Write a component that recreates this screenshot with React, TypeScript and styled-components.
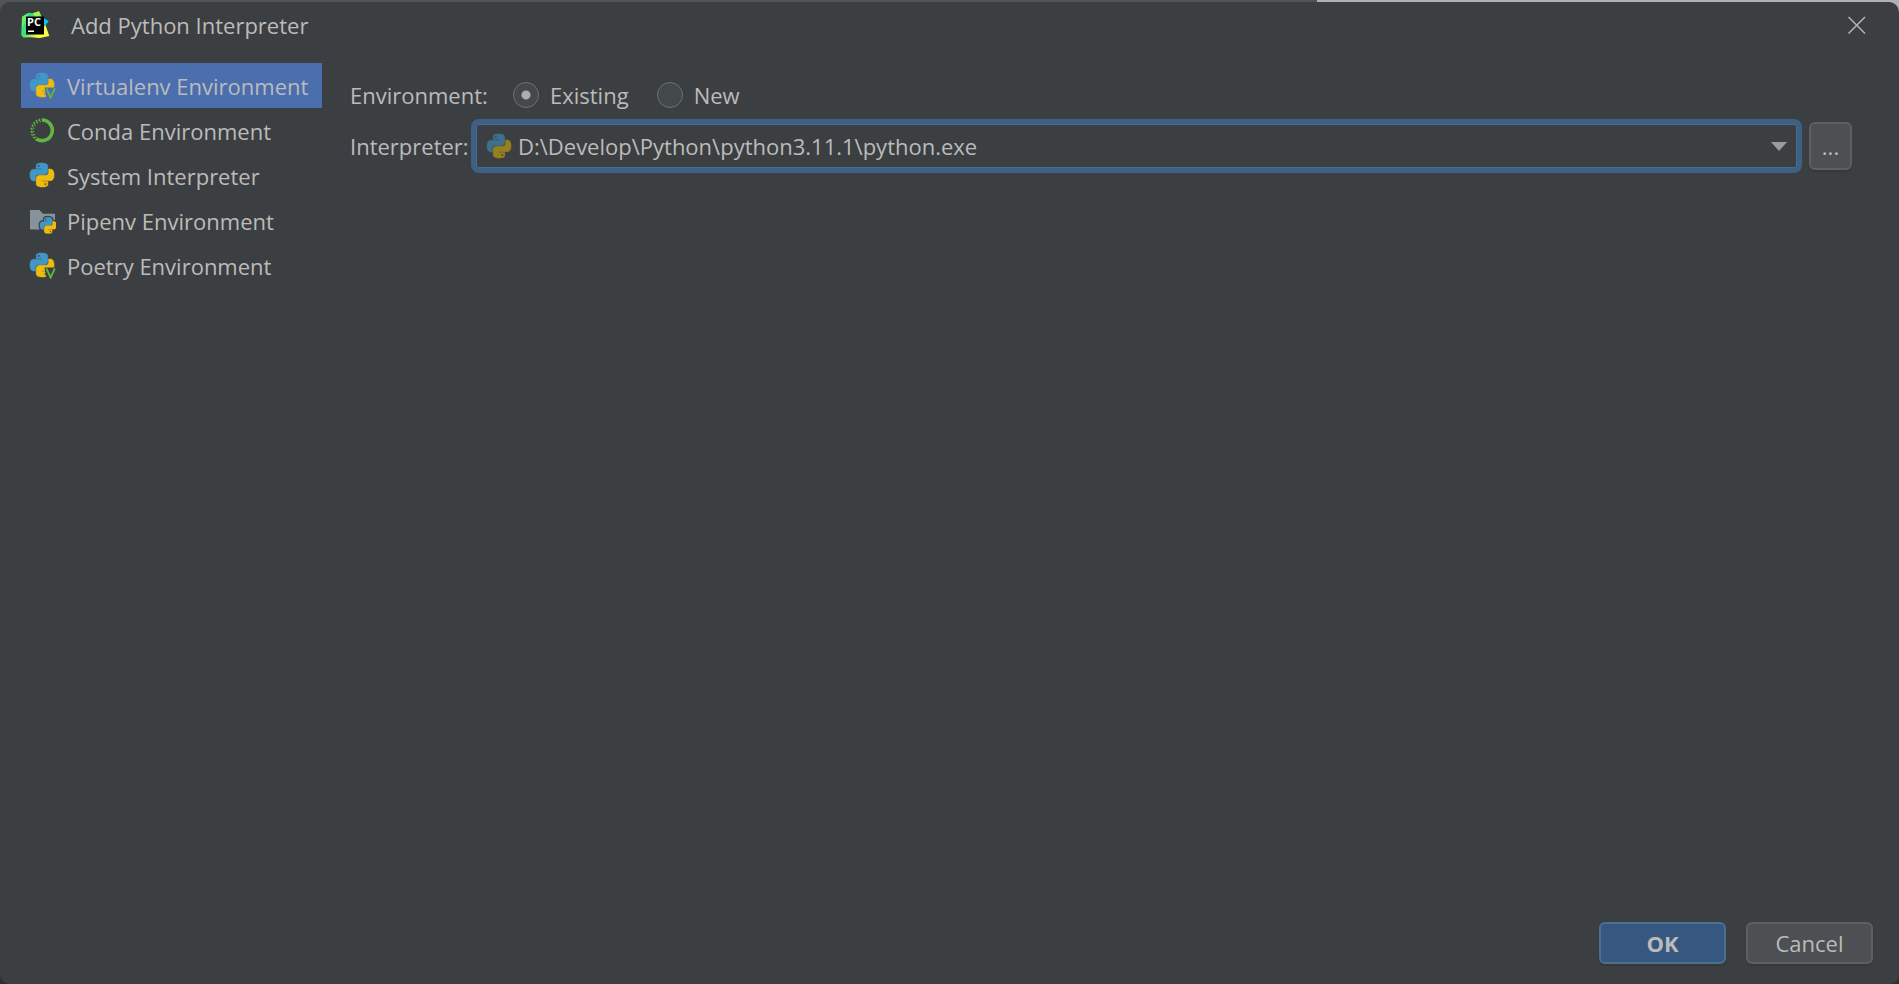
import React, { useState } from "react";
import styled, { createGlobalStyle } from "styled-components";

const font = `"Open Sans", "Noto Sans", sans-serif`;

const GlobalStyle = createGlobalStyle`
  *, *::before, *::after { box-sizing: border-box; }
  body { margin: 0; background: #2b2b2b; }
`;

/* The strip of desktop that shows above and behind the dialog's round corners. */
const Desktop = styled.div`
  min-height: 100vh;
  padding-top: 2px;
  display: flex;
  background: linear-gradient(to right, #515355 0 1317px, #b1b1b1 1317px 100%) top / 100% 12px no-repeat #2e3032;
`;

const Dialog = styled.form`
  flex: 1;
  display: flex;
  flex-direction: column;
  border-radius: 10px;
  background: #3c3f41;
  color: #bbbbbb;
  font-family: ${font};
  font-size: 22px;
  line-height: 30px;
`;

const TitleBar = styled.header`
  display: flex;
  align-items: center;
  height: 46px;
  padding: 0 30px 0 20px;
`;

const Title = styled.h1`
  flex: 1;
  margin: 0 0 0 21px;
  font-size: 22px;
  font-weight: 400;
  line-height: 30px;
`;

const CloseButton = styled.button`
  display: flex;
  padding: 2px;
  border: 0;
  background: none;
  color: #b4b5b6;
`;

const Body = styled.div`
  flex: 1;
  display: flex;
  gap: 28px;
  padding: 15px 47px 0 21px;
`;

const EnvironmentList = styled.nav`
  width: 301px;
  display: flex;
  flex-direction: column;
`;

const EnvironmentItem = styled.button<{ $selected: boolean }>`
  display: flex;
  align-items: center;
  gap: 11px;
  height: 45px;
  padding: 0 8px;
  border: 0;
  background: ${(p) => (p.$selected ? "#4b6eaf" : "transparent")};
  color: inherit;
  font: inherit;
  text-align: left;
  white-space: nowrap;
`;

const Settings = styled.main`
  flex: 1;
  display: flex;
  flex-direction: column;
  gap: 9px;
  padding-top: 17px;
`;

const RadioRow = styled.fieldset`
  display: flex;
  align-items: center;
  height: 30px;
  margin: 0;
  padding: 0;
  border: 0;
`;

const RowLabel = styled.span`
  width: 163px;
`;

const RadioLabel = styled.label`
  display: flex;
  align-items: center;
  gap: 11px;
  margin-right: 28px;
`;

const Radio = styled.input`
  appearance: none;
  width: 26px;
  height: 26px;
  margin: 0;
  border: 1px solid #6f7071;
  border-radius: 50%;
  background: #43494a;
  &:checked {
    background: radial-gradient(circle, #adadad 0 4px, #43494a 5px);
  }
`;

const InterpreterRow = styled.div`
  display: flex;
  align-items: center;
`;

const InterpreterLabel = styled.label`
  width: 121px;
`;

const ComboBox = styled.div`
  flex: 1;
  display: grid;
  grid-template-columns: auto 1fr auto;
  align-items: center;
  height: 54px;
  padding: 0 10px;
  border: 5px solid #3d6185;
  border-radius: 8px;
  box-shadow: inset 0 0 0 1px #466d94;
  & > svg {
    grid-row: 1;
    pointer-events: none;
  }
  & > svg:first-of-type {
    grid-column: 1;
  }
  & > svg:last-of-type {
    grid-column: 3;
  }
`;

const ComboSelect = styled.select`
  appearance: none;
  grid-row: 1;
  grid-column: 1 / -1;
  width: 100%;
  height: 38px;
  padding: 0 30px 0 32px;
  border: 0;
  outline: 0;
  background: transparent;
  color: inherit;
  font: inherit;
`;

const Button = styled.button<{ $primary?: boolean }>`
  width: 127px;
  height: 42px;
  padding: 0;
  border: 2px solid ${(p) => (p.$primary ? "#4c708c" : "#5e6060")};
  border-radius: 6px;
  background: ${(p) => (p.$primary ? "#365880" : "#4c5052")};
  box-shadow: 0 2px 2px rgba(0, 0, 0, 0.12);
  color: #bbbbbb;
  font: inherit;
  font-weight: ${(p) => (p.$primary ? 700 : 400)};
`;

const BrowseButton = styled(Button)`
  width: 43px;
  height: 48px;
  margin-left: 7px;
`;

const Footer = styled.footer`
  display: flex;
  justify-content: flex-end;
  gap: 20px;
  padding: 0 26px 20px;
`;

const BLUE =
  "M14.25.18l.9.2.73.26.59.3.45.32.34.34.25.34.16.33.1.3.04.26.02.2-.01.13V8.5l-.05.63-.13.55-.21.46-.26.38-.3.31-.33.25-.35.19-.35.14-.33.1-.3.07-.26.04-.21.02H8.77l-.69.05-.59.14-.5.22-.41.27-.33.32-.27.35-.2.36-.15.37-.1.35-.07.32-.04.27-.02.21v3.06H3.17l-.21-.03-.28-.07-.32-.12-.35-.18-.36-.26-.36-.36-.35-.46-.32-.59-.28-.73-.21-.88-.14-1.05-.05-1.23.06-1.22.16-1.04.24-.87.32-.71.36-.57.4-.44.42-.33.42-.24.4-.16.36-.1.32-.05.24-.01h.16l.06.01h8.16v-.83H6.18l-.01-2.75-.02-.37.05-.34.11-.31.17-.28.25-.26.31-.23.38-.2.44-.18.51-.15.58-.12.64-.1.71-.06.77-.04.84-.02 1.27.05zm-6.3 1.98l-.23.33-.08.41.08.41.23.34.33.22.41.09.41-.09.33-.22.23-.34.08-.41-.08-.41-.23-.33-.33-.22-.41-.09-.41.09z";
const YELLOW =
  "M21.04 6.11l.28.06.32.12.35.18.36.27.36.35.35.47.32.59.28.73.21.88.14 1.04.05 1.23-.06 1.23-.16 1.04-.24.86-.32.71-.36.57-.4.45-.42.33-.42.24-.4.16-.36.09-.32.05-.24.02-.16-.01h-8.22v.82h5.84l.01 2.76.02.36-.05.34-.11.31-.17.29-.25.25-.31.24-.38.2-.44.17-.51.15-.58.13-.64.09-.71.07-.77.04-.84.01-1.27-.04-1.07-.14-.9-.2-.73-.25-.59-.3-.45-.33-.34-.34-.25-.34-.16-.33-.1-.3-.04-.25-.02-.2.01-.13v-5.34l.05-.64.13-.54.21-.46.26-.38.3-.32.33-.24.35-.2.35-.14.33-.1.3-.06.26-.04.21-.02.13-.01h5.84l.69-.05.59-.14.5-.21.41-.28.33-.32.27-.35.2-.36.15-.36.1-.35.07-.32.04-.28.02-.21V6.07h2.09l.14.01zm-6.47 14.25l-.23.33-.08.41.08.41.23.33.33.23.41.08.41-.08.33-.23.23-.33.08-.41-.08-.41-.23-.33-.33-.23-.41-.08-.41.08z";

const Snakes = ({ blue = "#4097c8", yellow = "#eebc0e" }) => (
  <>
    <path fill={blue} stroke={blue} strokeWidth=".5" d={BLUE} />
    <path fill={yellow} stroke={yellow} strokeWidth=".5" d={YELLOW} />
  </>
);

const PythonIcon = ({ dim = false }: { dim?: boolean }) => (
  <svg width="27" height="27" viewBox="-1 -1 27 27" aria-hidden="true">
    {dim ? <Snakes blue="#3f6f8a" yellow="#97811f" /> : <Snakes />}
  </svg>
);

const VirtualenvIcon = ({ backdrop }: { backdrop: string }) => (
  <svg width="27" height="27" viewBox="-1 -1 27 27" aria-hidden="true">
    <Snakes />
    <path fill={backdrop} d="M14.5 14.6H26V26H16.6z" />
    <path fill="none" stroke="#62b543" strokeWidth="1.9" d="M16.4 15.4l4.2 9.2 4.2-9.2" />
  </svg>
);

const CondaIcon = () => (
  <svg width="27" height="27" viewBox="-1 -1 27 27" aria-hidden="true" fill="none" stroke="#62b543">
    <path strokeWidth="3.6" d="M12 2a10.300 10.300 0 1 1-5.500 19" />
    <path strokeWidth="1.3" strokeDasharray="1.6 1.6" d="M6.500 22.200A11.600 11.600 0 0 1 12 .8" />
    <path strokeWidth="1.3" strokeDasharray="1.5 1.5" strokeDashoffset="1.600" d="M6.300 21A10.400 10.400 0 0 1 12 2.100" />
    <path strokeWidth="1.200" strokeDasharray="1.300 1.900" d="M6.600 19.600A9.200 9.200 0 0 1 11.800 3.400" />
  </svg>
);

const PipenvIcon = () => (
  <svg width="27" height="27" viewBox="-1 -1 27 27" aria-hidden="true">
    <path fill="#87939a" d="M0 2h9.4l3.6 3.8H25V21.600H0z" />
    <g transform="translate(10 9.200) scale(.68)">
      <path fill="#3c3f41" stroke="#3c3f41" strokeWidth="4" d={BLUE} />
      <path fill="#3c3f41" stroke="#3c3f41" strokeWidth="4" d={YELLOW} />
      <Snakes />
    </g>
  </svg>
);

const PyCharmLogo = () => (
  <svg width="30" height="28" viewBox="0 0 30 28" aria-hidden="true">
    <defs>
      <linearGradient id="pcBase" x1="0" y1="0" x2="1" y2="1">
        <stop offset="0" stopColor="#21d789" />
        <stop offset=".5" stopColor="#3fe07c" />
        <stop offset=".75" stopColor="#fcf84a" />
      </linearGradient>
    </defs>
    <path fill="url(#pcBase)" d="M2 5.700L8.700 1.700l4 .6L19 .2l2 4.300 4 6 .300 3L29.300 25 20 26.900l-9-.7-7.700.3L1.200 24z" />
    <path fill="#6eea5f" d="M2 5.700L8.700 1.700 6.500 8 2 18z" />
    <path fill="#a6f04c" d="M12.700 2.300L19 .2l2 4.300-6 1.500z" />
    <path fill="#07c3f2" d="M23.500 7l5.200 2.900-3.300 4.500-1.900 1.100z" />
    <rect x="6" y="5.500" width="18" height="18" fill="#000" />
    <text x="7" y="15" fill="#fff" fontFamily={font} fontSize="11" fontWeight="700">PC</text>
    <rect x="8" y="19.500" width="6" height="1.500" fill="#fff" />
  </svg>
);

const environments = [
  { name: "Virtualenv Environment", icon: (bg: string) => <VirtualenvIcon backdrop={bg} /> },
  { name: "Conda Environment", icon: () => <CondaIcon /> },
  { name: "System Interpreter", icon: () => <PythonIcon /> },
  { name: "Pipenv Environment", icon: () => <PipenvIcon /> },
  { name: "Poetry Environment", icon: (bg: string) => <VirtualenvIcon backdrop={bg} /> },
];

export default function App() {
  const [selected, setSelected] = useState(0);
  return (
    <Desktop>
      <GlobalStyle />
      <Dialog onSubmit={(e) => e.preventDefault()}>
        <TitleBar>
          <PyCharmLogo />
          <Title>Add Python Interpreter</Title>
          <CloseButton type="button" aria-label="Close">
            <svg width="20" height="20" viewBox="0 0 20 20" fill="none" stroke="currentColor" strokeWidth="1.500">
              <path d="M1.500 2l16.500 16.500M18 2L1.500 18.500" />
            </svg>
          </CloseButton>
        </TitleBar>
        <Body>
          <EnvironmentList>
            {environments.map((env, i) => (
              <EnvironmentItem key={env.name} type="button" $selected={i === selected} onClick={() => setSelected(i)}>
                {env.icon(i === selected ? "#4b6eaf" : "#3c3f41")}
                {env.name}
              </EnvironmentItem>
            ))}
          </EnvironmentList>
          <Settings>
            <RadioRow aria-label="Environment">
              <RowLabel>Environment:</RowLabel>
              <RadioLabel>
                <Radio type="radio" name="environment" defaultChecked />
                Existing
              </RadioLabel>
              <RadioLabel>
                <Radio type="radio" name="environment" />
                New
              </RadioLabel>
            </RadioRow>
            <InterpreterRow>
              <InterpreterLabel htmlFor="interpreter">Interpreter:</InterpreterLabel>
              <ComboBox>
                <PythonIcon dim />
                <ComboSelect id="interpreter">
                  <option>D:\Develop\Python\python3.11.1\python.exe</option>
                </ComboSelect>
                <svg width="16" height="10" viewBox="0 0 16 10" aria-hidden="true">
                  <path fill="#9a9da0" d="M0 1h16L8 10z" />
                </svg>
              </ComboBox>
              <BrowseButton type="button" aria-label="Browse">...</BrowseButton>
            </InterpreterRow>
          </Settings>
        </Body>
        <Footer>
          <Button type="submit" $primary>OK</Button>
          <Button type="button">Cancel</Button>
        </Footer>
      </Dialog>
    </Desktop>
  );
}
